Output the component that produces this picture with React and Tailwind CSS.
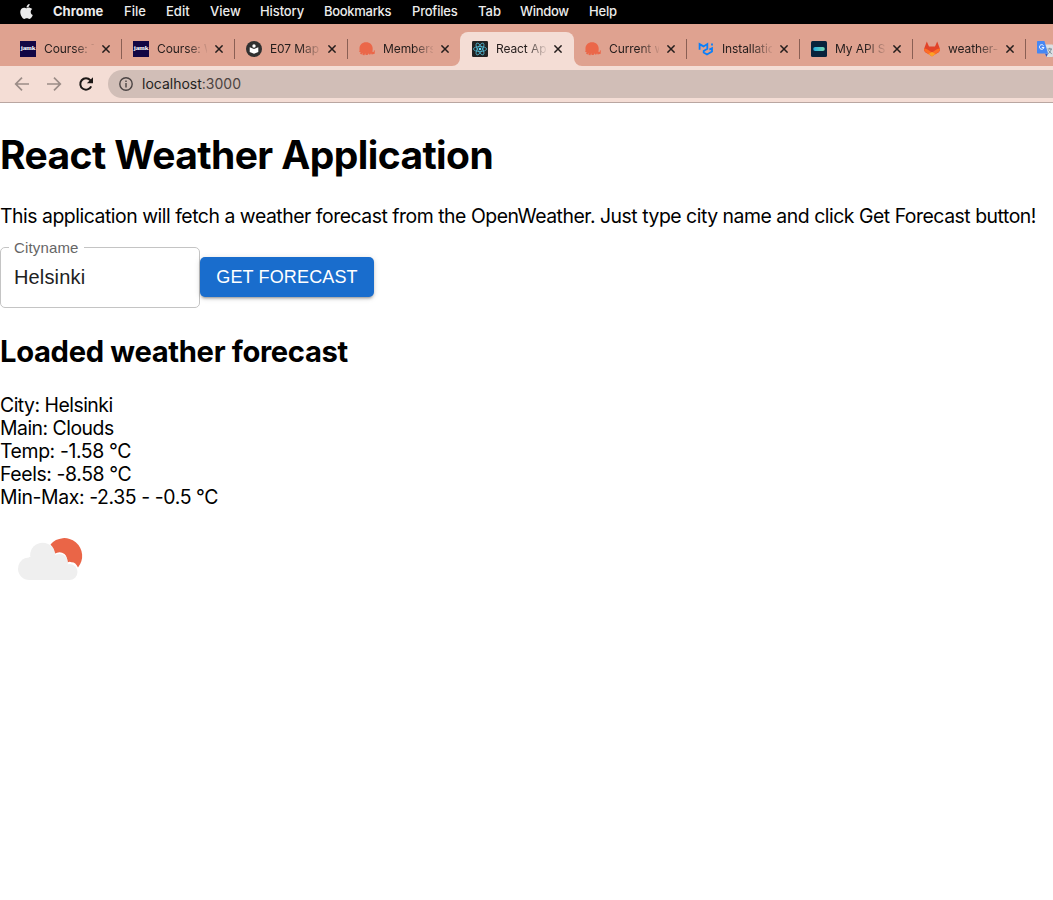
import React from "react";
import { FaApple } from "react-icons/fa";

const menu = [
  ["Chrome", "w-[71px] font-bold"],
  ["File", "w-[42px]"],
  ["Edit", "w-[44px]"],
  ["View", "w-[50px]"],
  ["History", "w-[64px] tracking-[-0.1px]"],
  ["Bookmarks", "w-[88px] tracking-[-0.3px]"],
  ["Profiles", "w-[66px] tracking-[-0.2px]"],
  ["Tab", "w-[42px]"],
  ["Window", "w-[69px] tracking-[-0.3px]"],
  ["Help", "w-[40px] tracking-[-0.2px]"],
];

function Jamk() {
  return (
    <span className="flex h-4 w-4 shrink-0 items-center justify-center bg-[#120644] pb-px font-['Liberation_Serif',serif] text-[7px] leading-none font-bold tracking-[-0.1px] text-white">
      jamk
    </span>
  );
}

function Reader() {
  return (
    <svg viewBox="0 0 16 16" className="h-4 w-4 shrink-0">
      <circle cx="8" cy="8" r="8" fill="#303030" />
      <circle cx="8" cy="5" r="1.7" fill="#fff" />
      <path d="M3.7 6.3 8 8l4.3-1.7v4.6L8 12.8l-4.3-1.9z" fill="#fff" />
    </svg>
  );
}

function OpenWeather() {
  return (
    <svg viewBox="0 0 16 16" className="h-4 w-4 shrink-0">
      <path d="M.6 9.200C-.2 4.600 2.800 1.300 7 1.300c4 0 6.700 2.700 6.700 6.500L13.500 11H14.600L15 9.300l.8.300-.1 3.100-3 .8-.7-1.300-.6 1.300H9.900L9.300 12.200 8.700 14H6.600L6.100 12.300 5.500 14.200l-2-.1.200-2-1.200 1.500-1.500-1.200.7-1.400L.2 11z" fill="#eb6749" />
    </svg>
  );
}

function ReactIcon() {
  return (
    <svg viewBox="0 0 16 16" className="h-4 w-4 shrink-0">
      <rect width="16" height="16" rx="1.2" fill="#222" />
      <g fill="none" stroke="#53c1de" strokeWidth="0.75">
        <ellipse cx="8" cy="8" rx="6.6" ry="2.5" />
        <ellipse cx="8" cy="8" rx="6.6" ry="2.5" transform="rotate(60 8 8)" />
        <ellipse cx="8" cy="8" rx="6.6" ry="2.5" transform="rotate(120 8 8)" />
      </g>
      <circle cx="8" cy="8" r="1.3" fill="#61dafb" />
    </svg>
  );
}

function Mui() {
  return (
    <svg viewBox="0 0 16 16" className="h-4 w-4 shrink-0" fill="none" stroke="#087ffb" strokeWidth="1.8">
      <path d="M1.6 8.8V3.1l3.900 2.300 3.800-2.300v4.600L5.700 9.900v1.700l3.300 1.900 5-2.900V7.200l-2.600 1.400" />
      <path d="M14 2.600v2" />
    </svg>
  );
}

function Hub() {
  return (
    <svg viewBox="0 0 16 16" className="h-4 w-4 shrink-0">
      <defs>
        <linearGradient id="bar">
          <stop offset="0" stopColor="#24aadf" />
          <stop offset="1" stopColor="#76d9ae" />
        </linearGradient>
      </defs>
      <rect width="16" height="16" rx="1.5" fill="#08233c" />
      <rect x="2.2" y="6.1" width="11.6" height="4" rx="2" fill="url(#bar)" />
    </svg>
  );
}

function Gitlab() {
  return (
    <svg viewBox="0 0 16 16" className="h-4 w-4 shrink-0">
      <path d="M2.800.400 5 5.500h6L13.200.400 16 8c.1 1.400-.3 2.400-1.200 3.200L8 15l-6.800-3.800C.3 10.400-.1 9.400 0 8z" fill="#e24329" />
      <path d="M0 7.500C2 7.500 3.600 8.300 5.100 9.400L8 11.500l2.900-2.100C12.400 8.300 14 7.500 16 7.500c.1 1.400-.3 2.400-1.200 3.200L8 15.500l-6.800-4.800C.3 9.900-.1 8.900 0 7.500z" fill="#fc6d26" />
      <path d="m8 11 3.500 2.100L8 15.500l-3.500-2.400z" fill="#fca326" />
    </svg>
  );
}

function Translate() {
  return (
    <svg viewBox="0 0 16 16" className="h-4 w-4 shrink-0">
      <path d="M6 3.500h9.200c.5 0 .8.300.8.800V15c0 .6-.3 1-.8 1H9.500z" fill="#dcdfe2" />
      <path d="M8 12.500h3L9.500 16z" fill="#3455c0" />
      <path d="M1 0h6.400l3.700 12.500H1c-.6 0-1-.4-1-1V1c0-.6.4-1 1-1z" fill="#4587f4" />
      <path d="M6.500 4.500A2.300 2.300 0 1 0 7 6.400H4.800" fill="none" stroke="#fff" strokeWidth="1" />
      <path d="M10.500 8H15m-2.200-1.200V8m1.400 0c-.4 2-1.500 3.600-3 4.600m.2-3.200 3.400 3.700" fill="none" stroke="#718690" strokeWidth=".9" />
    </svg>
  );
}

const tabs = [
  { title: "Course: T", Icon: Jamk },
  { title: "Course: W", Icon: Jamk },
  { title: "E07 Map", Icon: Reader },
  { title: "Members", Icon: OpenWeather, plain: true },
  { title: "React Ap", Icon: ReactIcon, active: true, plain: true },
  { title: "Current w", Icon: OpenWeather },
  { title: "Installatio", Icon: Mui },
  { title: "My API S", Icon: Hub },
  { title: "weather-", Icon: Gitlab },
];

function Flare({ className, d }) {
  return (
    <svg viewBox="0 0 8 8" className={"absolute bottom-0 h-2 w-2 " + className}>
      <path d={d} fill="#f4ddd5" />
    </svg>
  );
}

function Tab({ title, Icon, active, plain }) {
  return (
    <div className={"relative flex h-[34px] shrink-0 items-center pl-3 " + (active ? "-mr-px w-[114px] rounded-t-lg bg-[#f4ddd5]" : "w-[113px]")}>
      {active && <Flare className="-left-2" d="M8 0v8H0A8 8 0 0 0 8 0z" />}
      {active && <Flare className="-right-2" d="M0 0v8h8A8 8 0 0 1 0 0z" />}
      <Icon />
      <span className="ml-2 w-[50px] shrink-0 overflow-hidden text-[12px] leading-4 tracking-[-0.100px] whitespace-nowrap text-[#241d1c] [mask-image:linear-gradient(to_right,black_30px,transparent_52px)]">
        {title}
      </span>
      <svg viewBox="0 0 8 8" className="ml-2 h-2 w-2 shrink-0" stroke="#241d1c" strokeWidth="1.500">
        <path d="m.4.4 7.200 7.200m0-7.200L.4 7.600" />
      </svg>
      {!plain && <span className="ml-[11px] h-5 w-px shrink-0 bg-[#8a5f54]" />}
    </div>
  );
}

export default function App() {
  return (
    <div className="h-[900px] w-[1053px] overflow-hidden bg-white font-['Inter',sans-serif] text-black">
      <nav className="flex h-6 items-center bg-black pb-[2px] text-[13px] leading-[22px] font-medium text-[#ececec]">
        <FaApple className="mr-[19px] ml-[19px] h-[17px] w-[15px] shrink-0" />
        {menu.map(([name, cls]) => (
          <span key={name} className={"shrink-0 whitespace-nowrap " + cls}>{name}</span>
        ))}
      </nav>

      <div className="flex h-[42px] items-end overflow-hidden bg-[#dfa290] pl-2">
        {tabs.map((tab, i) => <Tab key={i} {...tab} />)}
        <div className="flex h-[34px] shrink-0 items-center pl-3"><Translate /></div>
      </div>

      <div className="flex h-[37px] items-center border-b border-[#b9a6a1] bg-[#f4ddd5] pl-[14px]">
        <svg viewBox="0 0 16 16" className="h-4 w-4" fill="none" stroke="#9b8c87" strokeWidth="1.700">
          <path d="M15 8H2m6-6.300L1.700 8 8 14.300" />
        </svg>
        <svg viewBox="0 0 16 16" className="ml-4 h-4 w-4" fill="none" stroke="#9b8c87" strokeWidth="1.700">
          <path d="M1 8h13M8 1.700 14.300 8 8 14.300" />
        </svg>
        <svg viewBox="0 0 16 16" className="ml-4 h-4 w-4" fill="none" stroke="#1c1817" strokeWidth="2">
          <path d="M13.200 10.300A5.700 5.700 0 1 1 12.300 4.200L13.500 5.500" />
          <path d="M15 1.200v6.100H8.900z" fill="#1c1817" stroke="none" />
        </svg>
        <div className="ml-[14px] flex h-7 flex-1 items-center rounded-l-full bg-[#d1beb7] pl-[11px]">
          <svg viewBox="0 0 14 14" className="h-[14px] w-[14px]" fill="none" stroke="#4b4444" strokeWidth="1.400">
            <circle cx="7" cy="7" r="6.200" />
            <path d="M7 6v4.400M7 3.500V5" />
          </svg>
          <span className="ml-[9px] text-[14px] leading-5 text-[#241f1e]">
            localhost<span className="text-[#4d4442]">:3000</span>
          </span>
        </div>
      </div>

      <main>
        <h1 className="mt-[27px] h-12 text-[39px] leading-[50px] font-bold tracking-[-0.600px] whitespace-nowrap">React Weather Application</h1>
        <p className="mt-[26px] h-6 text-[19.400px] leading-6 tracking-[-0.470px] whitespace-nowrap">
          This application will fetch a weather forecast from the OpenWeather. Just type city name and click Get Forecast button!
        </p>

        <div className="mt-[10px] flex h-[70px] font-['Liberation_Sans',sans-serif]">
          <fieldset className="h-[70px] w-[200px] rounded-[5px] border border-[#c4c4c4] pl-2">
            <legend className="h-[18px] px-[5px] pt-px text-[15px] leading-[18px] tracking-[0.150px] text-[#666]">Cityname</legend>
            <div className="pt-[9px] pl-[5px] text-[20px] leading-6 tracking-[0.150px] text-[#212121]">Helsinki</div>
          </fieldset>
          <button className="mt-[19px] h-10 w-[174px] rounded-[5px] bg-[#196dcd] text-[18px] leading-10 tracking-[0.150px] whitespace-nowrap text-white shadow-[0_3px_2px_-2px_rgba(0,0,0,0.2),0_2px_3px_rgba(0,0,0,0.16),0_1px_6px_rgba(0,0,0,0.12)]">
            GET FORECAST
          </button>
        </div>

        <h2 className="mt-[26px] h-9 text-[29.200px] leading-9 font-bold tracking-[-0.340px] whitespace-nowrap">Loaded weather forecast</h2>
        <div className="mt-[24px] text-[19.400px] leading-[23px] tracking-[-0.385px] whitespace-nowrap">
          <p className="tracking-[-0.500px]">City: Helsinki</p>
          <p className="tracking-[-0.500px]">Main: Clouds</p>
          <p>Temp: -1.58 °C</p>
          <p>Feels: -8.58 °C</p>
          <p>Min-Max: -2.35 - -0.5 °C</p>
        </div>

        <svg viewBox="0 0 100 100" className="h-[100px] w-[100px]">
          <path d="M50.500 35.500A17.500 17.500 0 1 1 78 58.500Q75.500 53 71.500 53.200 69 52 67.300 53.900 67.500 47.500 64.500 45 60 41.500 54.500 44.800 54 39 50.500 35.500z" fill="#ea6547" />
          <g fill="#efefef" transform="translate(0 -1)">
            <circle cx="29.300" cy="60.700" r="11.300" />
            <circle cx="42.700" cy="47.200" r="12.500" />
            <circle cx="59.500" cy="54.500" r="8.500" />
            <circle cx="69.500" cy="64" r="8" />
            <path d="M29 49h26l13 12 1.500 11H29z" />
          </g>
        </svg>
      </main>
    </div>
  );
}
